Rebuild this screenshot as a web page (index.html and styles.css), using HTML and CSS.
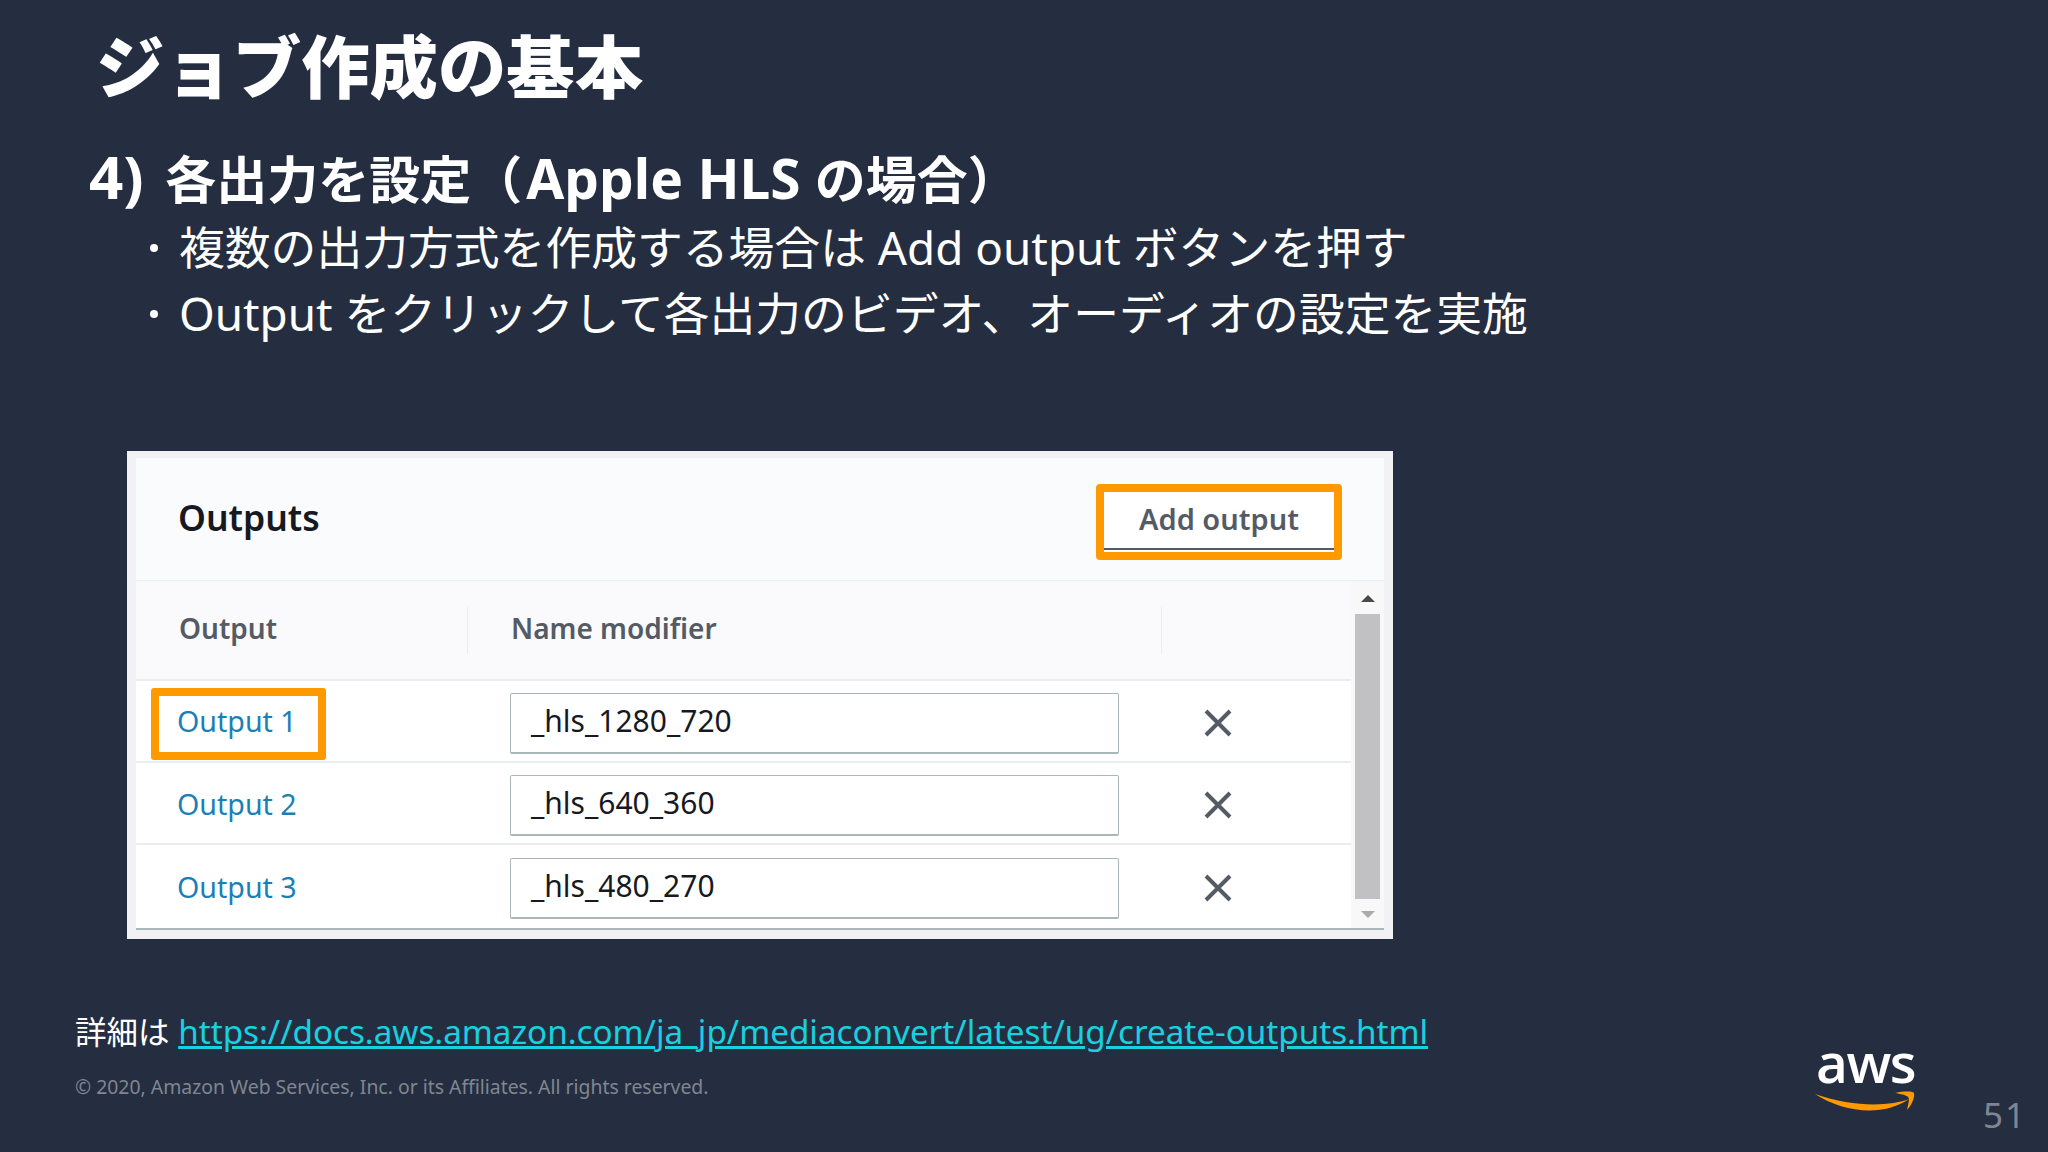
FILE: index.html
```html
<!DOCTYPE html>
<html lang="ja">
<head>
<meta charset="utf-8">
<title>ジョブ作成の基本</title>
<link rel="stylesheet" href="styles.css">
</head>
<body>
<div class="slide">
  <h1 class="title">ジョブ作成の基本</h1>
  <h2 class="subtitle"><span class="latin latin-num">4) </span>各出力を設定（<span class="latin latin-name">Apple HLS </span>の場合）</h2>
  <ul class="points">
    <li>複数の出力方式を作成する場合は Add output ボタンを押す</li>
    <li>Output をクリックして各出力のビデオ、オーディオの設定を実施</li>
  </ul>

  <div class="panel">
    <div class="panel-head">
      <span class="panel-title">Outputs</span>
      <span class="add-btn"><span class="add-btn-inner">Add output</span></span>
    </div>
    <div class="panel-body">
      <div class="table">
        <div class="thead">
          <div class="th th-output"><span class="lift">Output</span></div>
          <div class="th th-name"><span class="lift">Name modifier</span></div>
          <div class="th th-action"></div>
        </div>
        <div class="row">
          <div class="cell-output"><span class="link link-mark"><span class="link-mark-text">Output 1</span></span></div>
          <div class="cell-name"><span class="input"><span class="lift">_hls_1280_720</span></span></div>
          <div class="cell-action"><svg class="x" viewBox="0 0 28 28"><path d="M2 2 26 26M26 2 2 26"/></svg></div>
        </div>
        <div class="row">
          <div class="cell-output"><span class="link">Output 2</span></div>
          <div class="cell-name"><span class="input"><span class="lift">_hls_640_360</span></span></div>
          <div class="cell-action"><svg class="x" viewBox="0 0 28 28"><path d="M2 2 26 26M26 2 2 26"/></svg></div>
        </div>
        <div class="row">
          <div class="cell-output"><span class="link">Output 3</span></div>
          <div class="cell-name"><span class="input"><span class="lift">_hls_480_270</span></span></div>
          <div class="cell-action"><svg class="x" viewBox="0 0 28 28"><path d="M2 2 26 26M26 2 2 26"/></svg></div>
        </div>
      </div>
      <div class="scrollbar">
        <span class="arrow-up"></span>
        <span class="thumb"></span>
        <span class="arrow-down"></span>
      </div>
    </div>
  </div>

  <div class="foot">
    <div class="foot-left">
      <p class="detail"><span class="detail-label">詳細は</span> <a class="url">https://docs.aws.amazon.com/ja_jp/mediaconvert/latest/ug/create-outputs.html</a></p>
      <p class="copy">© 2020, Amazon Web Services, Inc. or its Affiliates. All rights reserved.</p>
    </div>
    <div class="logo">
      <span class="logo-text">aws</span>
      <svg class="smile" viewBox="0 0 102 24">
        <path class="smile-arc" d="M1 3C30 22 70 26 96 8C78 15 40 17 1 3Z"/>
        <path class="smile-arc" d="M82 2C90 0 99 0 101 2C102 6 99 14 94 19C95 13 97 8 95 6C93 4 87 3 82 2Z"/>
      </svg>
    </div>
    <span class="page-no">51</span>
  </div>
</div>
</body>
</html>
```

FILE: styles.css
```css
* { box-sizing: border-box; }
html, body { margin: 0; padding: 0; }
body {
  background: #252e40;
  font-family: "Noto Sans", "Noto Sans CJK JP", sans-serif;
  color: #fff;
}
.slide {
  width: 2048px;
  height: 1152px;
  padding-top: 22px;
  overflow: hidden;
}
.title {
  margin: 0 0 0 96px;
  font-family: "Noto Sans CJK JP", sans-serif;
  font-size: 68.4px;
  line-height: 84px;
  font-weight: 900;
}
.subtitle {
  height: 63px;
  margin: 40px 0 0 89px;
  font-size: 51px;
  line-height: 60px;
  font-weight: 700;
}
.latin { font-size: 55px; }
.latin-num { font-size: 60px; line-height: 60px; margin-right: 6px; }
.latin-name { margin-left: 4px; }
.points {
  list-style: none;
  margin: 5px 0 0 0;
  padding: 0 0 0 179px;
  font-size: 45.8px;
  line-height: 66px;
}
.points li { position: relative; }
.points li::before {
  content: "";
  position: absolute;
  left: -29px;
  top: 30px;
  width: 8px;
  height: 8px;
  border-radius: 50%;
  background: #fff;
}

/* console screenshot */
.panel {
  width: 1266px;
  height: 488px;
  margin: 105px 0 0 127px;
  padding: 7px 9px 9px;
  background: #f2f2f4;
  color: #16191f;
  font-family: "Noto Sans", sans-serif;
}
.panel-head {
  height: 123px;
  padding: 0 42px;
  display: flex;
  align-items: center;
  justify-content: space-between;
  background: #fafbfc;
  border-bottom: 1px solid #eaeded;
}
.panel-title { font-size: 35.5px; font-weight: 600; position: relative; top: -2px; }
.add-btn {
  margin-top: 6px;
  width: 246px;
  height: 76px;
  border: 8px solid #ff9900;
  border-radius: 4px;
  background: #fff;
  color: #545b64;
  font-size: 29px;
  font-weight: 600;
}
.add-btn-inner {
  display: flex;
  align-items: center;
  justify-content: center;
  height: 58px;
  padding-bottom: 4px;
  border-bottom: 2px solid #545b64;
}
.panel-body {
  display: flex;
  height: 349px;
  background: #fff;
  border-bottom: 2px solid #aab7b8;
}
.table { width: 1215px; }
.thead {
  height: 100px;
  display: flex;
  align-items: center;
  background: #fafafc;
  border-bottom: 2px solid #eaeded;
  color: #545b64;
  font-size: 28px;
  font-weight: 600;
}
.th { height: 47px; display: flex; align-items: center; padding-left: 43px; }
.th-output { width: 332px; border-right: 1px solid #eaeded; }
.th-name { width: 694px; border-right: 1px solid #eaeded; }
.lift { position: relative; top: -2px; }
.row {
  height: 82px;
  display: flex;
  align-items: center;
  border-bottom: 2px solid #eaeded;
  font-size: 29px;
}
.row:last-child { border-bottom: 0; }
.cell-output { width: 332px; padding-left: 41px; font-size: 28.6px; }
.cell-name { width: 694px; padding-left: 42px; font-size: 30px; }
.cell-action { padding-left: 42px; display: flex; }
.link { color: #1a7fb8; }
.link-mark {
  display: inline-flex;
  align-items: center;
  width: 175px;
  height: 72px;
  margin: 5px 0 0 -26px;
  padding-left: 18px;
  border: 8px solid #ff9900;
  border-radius: 3px;
}
.link-mark-text { position: relative; top: -3px; }
.input {
  display: flex;
  align-items: center;
  width: 609px;
  height: 61px;
  margin-top: 4px;
  padding-left: 20px;
  border: 1px solid #aab7b8;
  border-bottom-width: 2px;
  border-radius: 2px;
  color: #16191f;
}
.x { width: 28px; height: 28px; margin-top: 3px; }
.x path { fill: none; stroke: #545b64; stroke-width: 4; }
.scrollbar {
  width: 33px;
  display: flex;
  flex-direction: column;
  align-items: center;
  padding: 14px 0 0 0;
  background: #f8f8f9;
}
.thumb { width: 25px; height: 285px; margin: 12px 0 12px; background: #c1c0c3; }
.arrow-up {
  border: 7px solid transparent;
  border-top: 0;
  border-bottom: 7px solid #4a4a4c;
}
.arrow-down {
  border: 7px solid transparent;
  border-bottom: 0;
  border-top: 7px solid #a9a9ab;
}

/* footer */
.foot {
  display: flex;
  align-items: flex-start;
  margin-top: 68px;
}
.foot-left { width: 1814px; padding-left: 75px; }
.detail { margin: 0; font-size: 33.2px; line-height: 50px; }
.detail-label { font-size: 31.5px; }
.url { color: #18d1e0; text-decoration: underline; }
.copy { margin: 15px 0 0; font-size: 19.4px; line-height: 30px; color: #7f8692; }
.logo {
  width: 99px;
  margin-top: 32px;
  display: flex;
  flex-direction: column;
}
.logo-text {
  padding-left: 2px;
  font-family: "Open Sans", sans-serif;
  font-size: 55px;
  font-weight: 600;
  line-height: 46px;
  letter-spacing: -1.5px;
}
.smile { width: 101px; height: 24px; margin-top: 6px; }
.smile-arc { fill: #ff9900; }
.page-no {
  margin: 88px 0 0 70px;
  font-size: 35px;
  line-height: 40px;
  letter-spacing: 2px;
  color: #7f8692;
}
```
